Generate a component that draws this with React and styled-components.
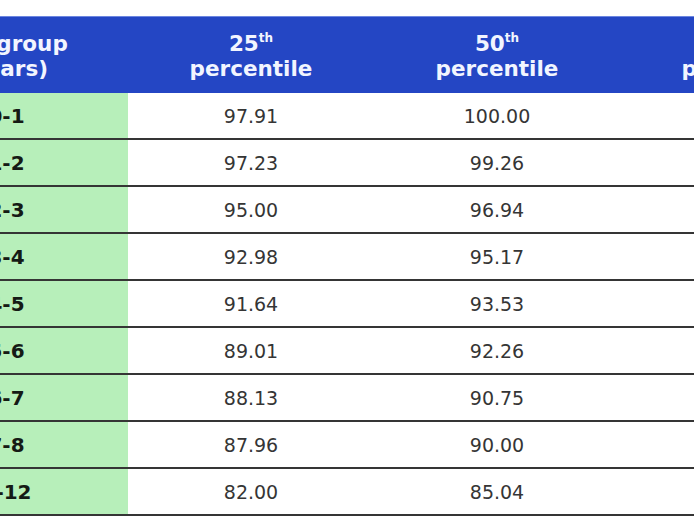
import React from 'react';
import styled, { createGlobalStyle } from 'styled-components';

const GlobalStyle = createGlobalStyle`
  html, body {
    margin: 0;
    padding: 0;
    background: #ffffff;
    overflow: hidden;
  }
  body {
    font-family: "DejaVu Sans", "Liberation Sans", sans-serif;
  }
`;

const Page = styled.div`
  width: 694px;
  height: 532px;
  overflow: hidden;
  padding-top: 16px;
  box-sizing: border-box;
`;

const Table = styled.table`
  border-collapse: collapse;
  table-layout: fixed;
  width: 984px;
  margin-left: -118px;
`;

const HeadRow = styled.tr`
  background: #2446c4;
  box-shadow: inset 0 1px 0 #6c86e0;
`;

const HeadCell = styled.th`
  width: 246px;
  height: 75px;
  padding: 2px 0 0;
  color: #f2f5ff;
  font-size: 21.5px;
  font-weight: 700;
  line-height: 25px;
  text-align: center;
  vertical-align: middle;
`;

const Sup = styled.sup`
  font-size: 12px;
  line-height: 0;
  vertical-align: 9px;
  font-weight: 600;
`;

const Row = styled.tr`
  border-bottom: 2px solid #353535;
`;

const Cell = styled.td`
  height: 45px;
  padding: 0;
  text-align: center;
  vertical-align: middle;
  font-size: 19px;
  color: #353535;
  background: ${(p) => (p.$group ? '#b7efba' : '#ffffff')};
  font-weight: ${(p) => (p.$group ? 700 : 400)};
  ${(p) => p.$group && 'color: #151a15; font-size: 20px; padding-left: 3px;'}
`;

const rows = [
  ['0-1', '97.91', '100.00'],
  ['1-2', '97.23', '99.26'],
  ['2-3', '95.00', '96.94'],
  ['3-4', '92.98', '95.17'],
  ['4-5', '91.64', '93.53'],
  ['5-6', '89.01', '92.26'],
  ['6-7', '88.13', '90.75'],
  ['7-8', '87.96', '90.00'],
  ['8-12', '82.00', '85.04'],
];

function Percentile({ n }) {
  return (
    <>
      {n}
      <Sup>th</Sup>
      <br />
      percentile
    </>
  );
}

export default function App() {
  return (
    <Page>
      <GlobalStyle />
      <Table>
        <thead>
          <HeadRow>
            <HeadCell>
              Age group
              <br />
              (years)
            </HeadCell>
            <HeadCell><Percentile n="25" /></HeadCell>
            <HeadCell><Percentile n="50" /></HeadCell>
            <HeadCell><Percentile n="75" /></HeadCell>
          </HeadRow>
        </thead>
        <tbody>
          {rows.map(([group, p25, p50]) => (
            <Row key={group}>
              <Cell $group>{group}</Cell>
              <Cell>{p25}</Cell>
              <Cell>{p50}</Cell>
              <Cell />
            </Row>
          ))}
        </tbody>
      </Table>
    </Page>
  );
}
